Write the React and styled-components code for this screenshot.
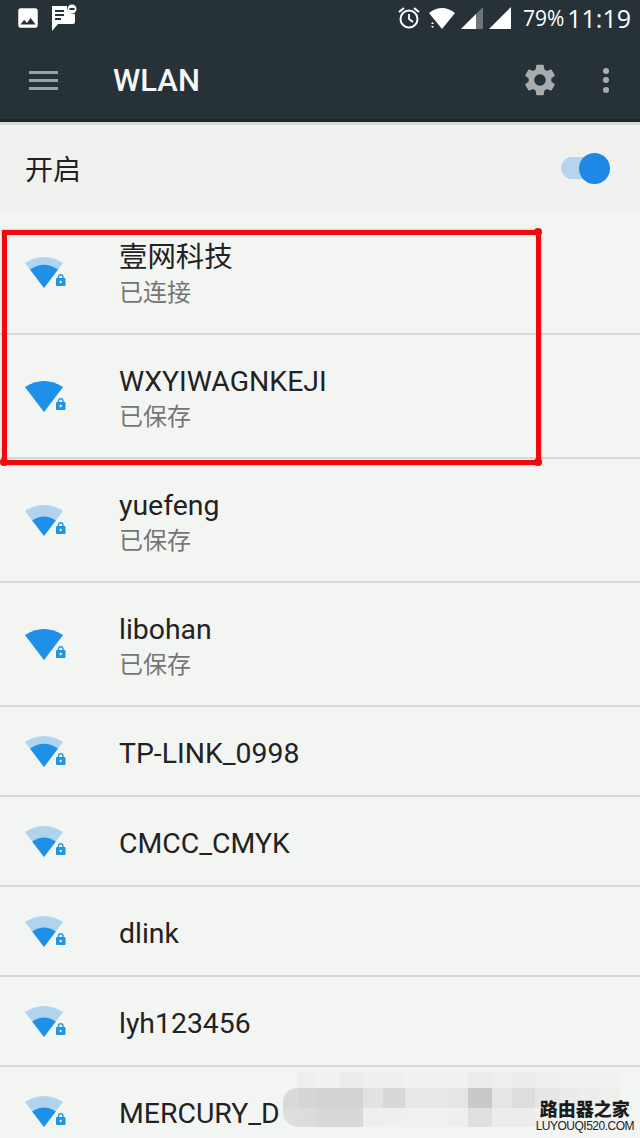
import React from 'react';
import styled, { createGlobalStyle } from 'styled-components';
import { MdImage, MdSettings } from 'react-icons/md';

const GlobalStyle = createGlobalStyle`
  html, body {
    margin: 0;
    padding: 0;
    background: #f3f5f3;
  }
  body {
    font-family: Roboto, "Noto Sans CJK SC", sans-serif;
  }
`;

const networks = [
  { name: '壹网科技', status: '已连接', bars: 3 },
  { name: 'WXYIWAGNKEJI', status: '已保存', bars: 4 },
  { name: 'yuefeng', status: '已保存', bars: 2 },
  { name: 'libohan', status: '已保存', bars: 4 },
  { name: 'TP-LINK_0998', bars: 3 },
  { name: 'CMCC_CMYK', bars: 2 },
  { name: 'dlink', bars: 2 },
  { name: 'lyh123456', bars: 2 },
  { name: 'MERCURY_D', bars: 2 },
];

// mosaic over the hidden part of the last network name
const blurWidths = [15, 17, 25, 23, 20, 22, 21, 21, 21, 24, 20, 23, 25, 20, 20, 20];
const blurRows = [
  { height: 16, shades: ['#f3f5f3', '#eeeeed', '#f1f2f0', '#ececeb', '#efefee', '#efefee', '#f1f2f0', '#f1f2f0', '#f1f2f0', '#ececeb', '#eeeeed', '#ececeb', '#eeeeed', '#f0f0ef', '#f1f2f0', '#f1f2f0'] },
  { height: 20, corner: '14px 0 0 0', shades: ['#d9d9d8', '#d6d6d5', '#d3d3d2', '#d3d3d2', '#e2e2e1', '#d8d8d7', '#e8e8e7', '#e8e8e7', '#e5e5e4', '#c9c9c8', '#e6e6e5', '#dedddd', '#e6e6e5', '#ebebea', '#ededec', '#eeeeed'] },
  { height: 19, corner: '0 0 0 16px', shades: ['#dededd', '#dcdcdb', '#d8d8d7', '#d8d8d7', '#eeeeed', '#efefee', '#f0f0ef', '#f0f0ef', '#eeeeed', '#dfdfde', '#ececeb', '#ececeb', '#f0f0ef', '#f1f2f0', '#f1f2f0', '#f2f3f1'] },
];

const App = () => (
  <Page>
    <GlobalStyle />
    <Header>
      <StatusBar>
        <StatusLeft>
          <MdImage size={26} color="#fff" />
          <MessageIcon />
        </StatusLeft>
        <StatusRight>
          <AlarmIcon />
          <WifiStatusIcon />
          <SignalIcon dim />
          <SignalIcon />
          <StatusText>79%</StatusText>
          <StatusClock>11:19</StatusClock>
        </StatusRight>
      </StatusBar>
      <Toolbar>
        <Hamburger>
          <span />
          <span />
          <span />
        </Hamburger>
        <Title>WLAN</Title>
        <MdSettings size={38} color="#a9adad" />
        <MoreDots>
          <span />
          <span />
          <span />
        </MoreDots>
      </Toolbar>
    </Header>

    <SwitchRow>
      <SwitchLabel>开启</SwitchLabel>
      <Track>
        <Thumb />
      </Track>
    </SwitchRow>

    <List>
      {networks.map(net => (
        <Row key={net.name} $tall={!!net.status}>
          <WifiIcon bars={net.bars} />
          <RowText>
            <RowTitle>{net.name}</RowTitle>
            {net.status && <RowStatus>{net.status}</RowStatus>}
          </RowText>
        </Row>
      ))}
    </List>

    <Highlight>
      <InkDot $top={-7} $left={527} />
      <InkDot $top={223} $left={-7} />
      <InkDot $top={223} $left={527} />
    </Highlight>

    <BlurPatch>
      {blurRows.map((row, i) => (
        <BlurRow key={i} $height={row.height} $corner={row.corner}>
          {row.shades.map((shade, j) => (
            <BlurCell key={j} $width={blurWidths[j]} $shade={shade} />
          ))}
        </BlurRow>
      ))}
    </BlurPatch>

    <Watermark>
      <WatermarkName>路由器之家</WatermarkName>
      <WatermarkUrl>LUYOUQI520.COM</WatermarkUrl>
    </Watermark>
  </Page>
);

export default App;

const MessageIcon = () => (
  <svg width="28" height="28" viewBox="0 0 28 28">
    <path fill="#fff" d="M2 2 H17 A7 7 0 0 0 25 10 V18 Q25 20 23 20 H8 L2 27 Z" />
    <rect x="5" y="6" width="9" height="2" fill="#263238" />
    <rect x="5" y="10" width="9" height="2" fill="#263238" />
    <rect x="5" y="14" width="6" height="2" fill="#263238" />
    <circle cx="22" cy="5" r="4.5" fill="#fff" />
    <rect x="19.5" y="4" width="5" height="2" fill="#263238" />
  </svg>
);

const AlarmIcon = () => (
  <AlarmSvg width="24" height="24" viewBox="0 0 24 24" fill="none" stroke="#fff">
    <circle cx="12" cy="13" r="8.5" strokeWidth="2" />
    <path d="M12 8 V13 L16 16" strokeWidth="1.8" />
    <path d="M2 6 L7 2 M22 6 L17 2" strokeWidth="2.2" />
  </AlarmSvg>
);

const WifiStatusIcon = () => (
  <svg width="28" height="24" viewBox="0 0 28 24">
    <path fill="#fff" d="M1 7 Q14 -3 27 7 L14 23 Z" />
    <path fill="#fff" d="M3 18 L4.5 16 L6 18 Z M3 20 L6 20 L4.5 22 Z" />
  </svg>
);

const SignalIcon = ({ dim }) => (
  <svg width="23" height="22" viewBox="0 0 23 22">
    <path fill={dim ? '#6f7679' : '#fff'} d="M0 22 L22 0 V22 Z" />
    {dim && <path fill="#fff" d="M0 22 L15 7 V22 Z" />}
  </svg>
);

const innerSector = {
  2: 'M7.200 15.500 Q19 7.500 30.800 15.500 L19 31 Z',
  3: 'M5 12.600 Q19 3 33 12.600 L19 31 Z',
  4: 'M0 6 Q19 -6 38 6 L19 31 Z',
};

const WifiIcon = ({ bars }) => (
  <WifiSvg width="42" height="32" viewBox="0 0 42 32">
    <path fill="#b0d4ee" d="M0 6 Q19 -6 38 6 L19 31 Z" />
    <path fill="#1e90e8" d={innerSector[bars]} />
    <path fill="none" stroke="#2196e0" strokeWidth="1.4" d="M33.500 21 V19.500 A2.300 2.300 0 0 1 38 19.500 V21" />
    <rect x="31" y="21" width="9.500" height="8" rx="1" fill="#2196e0" />
    <circle cx="35.700" cy="25" r="1.200" fill="#f3f5f3" />
  </WifiSvg>
);

const Page = styled.div`
  position: relative;
  width: 640px;
  height: 1138px;
  overflow: hidden;
  background: #f3f5f3;
`;

const Header = styled.header`
  background: #263238;
  height: 122px;
  border-bottom: 3px solid #d7d9d7;
  box-shadow: inset 0 -3px 0 #1e272b;
`;

const StatusBar = styled.div`
  display: flex;
  justify-content: space-between;
  align-items: center;
  height: 36px;
  padding: 0 9px 0 15px;
`;

const StatusLeft = styled.div`
  display: flex;
  align-items: center;
  gap: 9px;
`;

const StatusRight = styled.div`
  display: flex;
  align-items: center;
  gap: 5px;
`;

const AlarmSvg = styled.svg`
  margin-right: 2px;
`;

const StatusText = styled.span`
  margin-left: 6px;
  font-family: "Open Sans", sans-serif;
  font-size: 21px;
  color: #fff;
`;

const StatusClock = styled.span`
  margin-left: -2px;
  font-family: "Open Sans", sans-serif;
  font-size: 25px;
  color: #fff;
`;

const Toolbar = styled.div`
  display: flex;
  align-items: center;
  height: 84px;
  margin-top: 2px;
  padding: 0 0 0 29px;
`;

const Hamburger = styled.div`
  display: flex;
  flex-direction: column;
  gap: 5px;
  width: 29px;
  span {
    display: block;
    height: 3px;
    background: #98a1a4;
  }
`;

const Title = styled.h1`
  flex: 1;
  margin: 0 0 0 55px;
  font-size: 31px;
  font-weight: 500;
  color: #f5f7f7;
`;

const MoreDots = styled.div`
  display: flex;
  flex-direction: column;
  gap: 3.500px;
  margin: 0 31px 0 44px;
  span {
    display: block;
    width: 6px;
    height: 6px;
    border-radius: 50%;
    background: #a9adad;
  }
`;

const SwitchRow = styled.div`
  display: flex;
  align-items: center;
  justify-content: space-between;
  height: 86px;
  padding: 0 35px 0 25px;
  background: #f1f2f0;
`;

const SwitchLabel = styled.span`
  font-size: 28px;
  color: #222;
`;

const Track = styled.div`
  position: relative;
  width: 44px;
  height: 22px;
  border-radius: 11px;
  background: #b7d4ee;
`;

const Thumb = styled.div`
  position: absolute;
  top: -4.500px;
  right: -5px;
  width: 31px;
  height: 31px;
  border-radius: 50%;
  background: #1e88e5;
`;

const List = styled.div`
  display: flex;
  flex-direction: column;
`;

const Row = styled.div`
  display: flex;
  align-items: center;
  flex-shrink: 0;
  box-sizing: border-box;
  height: ${props => (props.$tall ? '124px' : '90px')};
  padding-left: 25px;
  border-bottom: 2px solid #d6d8d6;
`;

const WifiSvg = styled.svg`
  flex-shrink: 0;
  margin-top: 1px;
`;

const RowText = styled.div`
  display: flex;
  flex-direction: column;
  margin: 6px 0 0 52px;
`;

const RowTitle = styled.span`
  font-size: 28.400px;
  line-height: 36px;
  color: #222;
`;

const RowStatus = styled.span`
  font-size: 24px;
  line-height: 35px;
  color: #757575;
`;

const Highlight = styled.div`
  position: absolute;
  top: 230px;
  left: 2px;
  box-sizing: border-box;
  width: 539px;
  height: 235px;
  border: 5px solid #ef0a10;
  box-shadow: 0 0 2px rgba(239, 10, 16, 0.5);
`;

const InkDot = styled.span`
  position: absolute;
  top: ${props => props.$top}px;
  left: ${props => props.$left}px;
  width: 8px;
  height: 8px;
  border-radius: 50%;
  background: #ef0a10;
`;

const BlurPatch = styled.div`
  position: absolute;
  top: 1072px;
  left: 283px;
  display: flex;
  flex-direction: column;
`;

const BlurRow = styled.div`
  display: flex;
  height: ${props => props.$height}px;
  & > div:first-child {
    border-radius: ${props => props.$corner || 0};
  }
`;

const BlurCell = styled.div`
  width: ${props => props.$width}px;
  background: ${props => props.$shade};
`;

const Watermark = styled.div`
  position: absolute;
  right: 6px;
  bottom: 5px;
  display: flex;
  flex-direction: column;
  align-items: center;
`;

const WatermarkName = styled.span`
  font-family: "Noto Sans CJK SC", sans-serif;
  font-size: 18px;
  font-weight: 900;
  line-height: 22px;
  color: #1c1c1c;
`;

const WatermarkUrl = styled.span`
  font-family: "Liberation Sans", sans-serif;
  font-size: 12px;
  line-height: 14px;
  letter-spacing: -0.5px;
  color: #222;
`;
